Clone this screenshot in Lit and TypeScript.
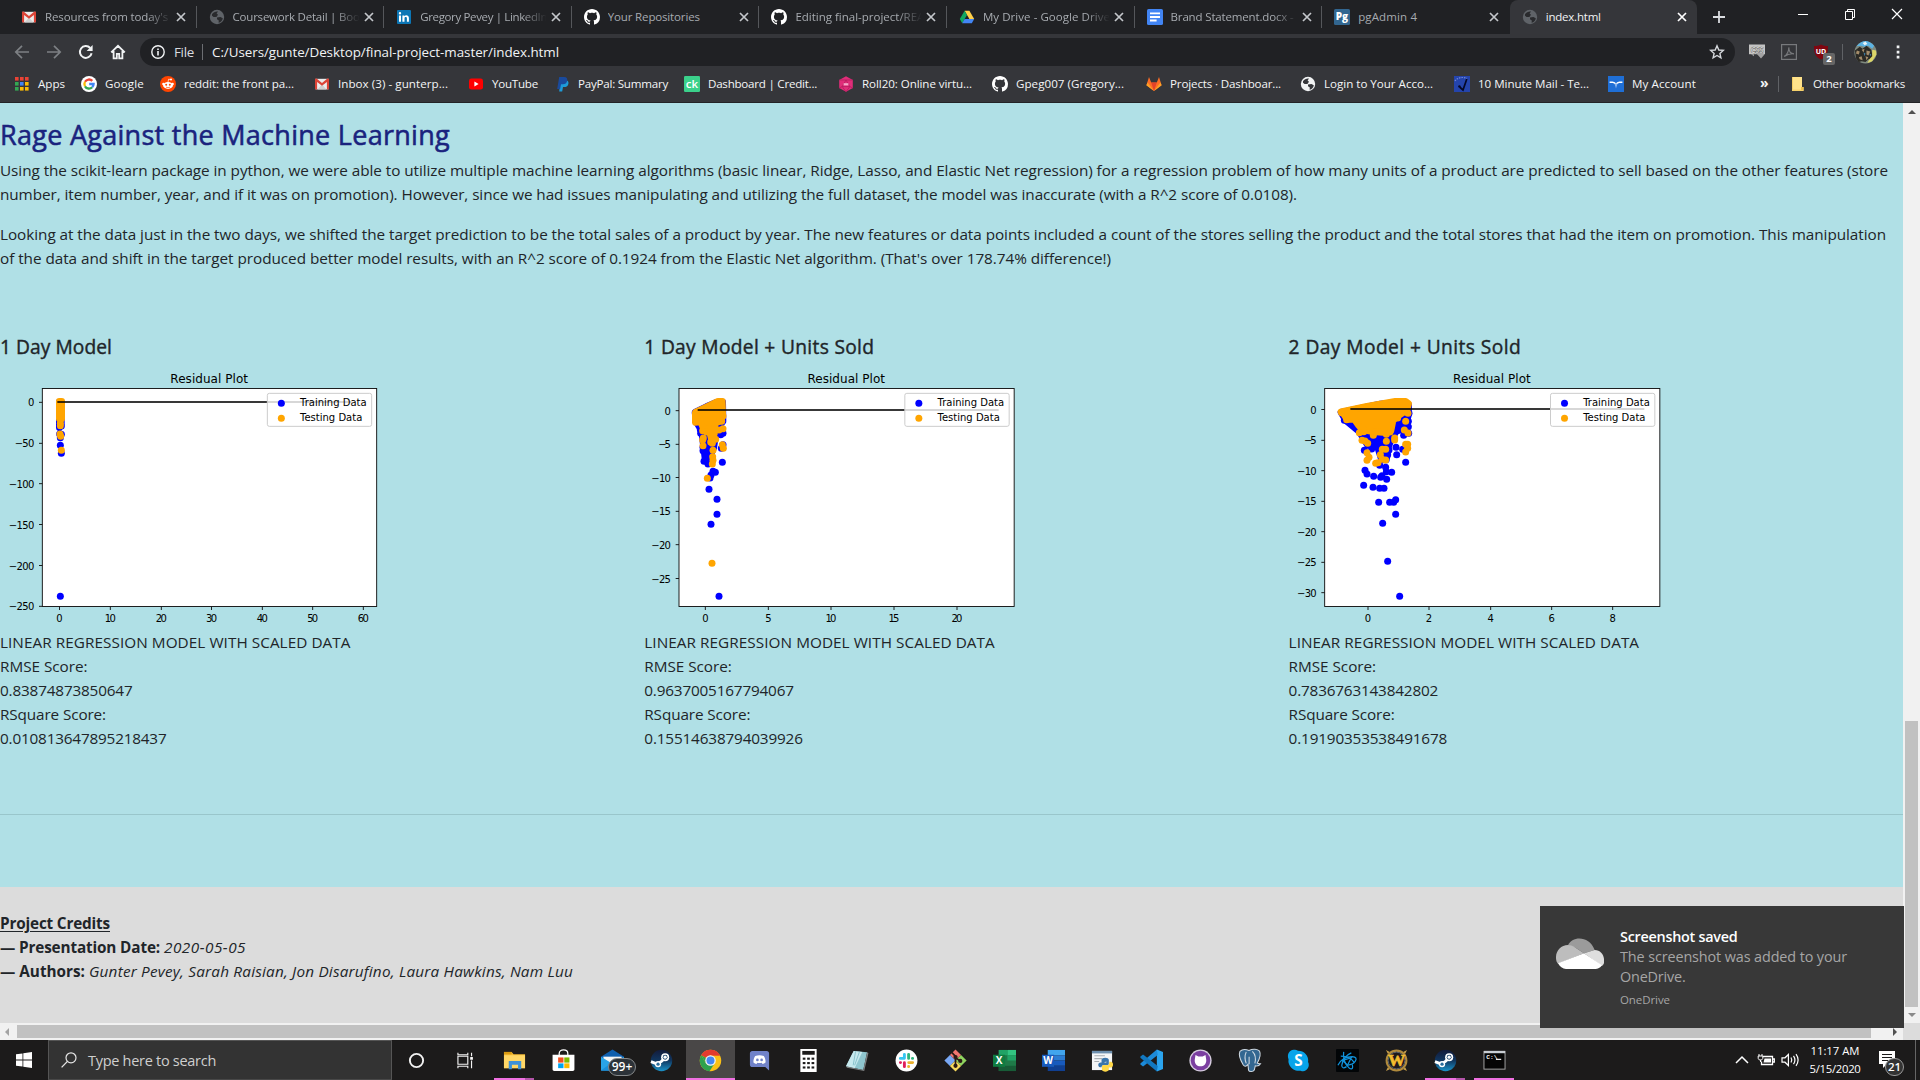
import { LitElement, html, svg, css, TemplateResult } from "lit";
import { customElement, property } from "lit/decorators.js";
import { classMap } from "lit/directives/class-map.js";

const GH =
  "M8 0C3.58 0 0 3.58 0 8c0 3.54 2.29 6.53 5.47 7.59.4.07.55-.17.55-.38 0-.19-.01-.82-.01-1.49-2.01.37-2.53-.49-2.69-.94-.09-.23-.48-.94-.82-1.13-.28-.15-.68-.52-.01-.53.63-.01 1.08.58 1.23.82.72 1.21 1.87.87 2.33.66.07-.52.28-.87.51-1.07-1.78-.2-3.64-.89-3.64-3.95 0-.87.31-1.59.82-2.15-.08-.2-.36-1.02.08-2.12 0 0 .67-.21 2.2.82.64-.18 1.32-.27 2-.27s1.36.09 2 .27c1.53-1.04 2.2-.82 2.2-.82.44 1.1.16 1.92.08 2.12.51.56.82 1.27.82 2.15 0 3.07-1.87 3.75-3.65 3.95.29.25.54.73.54 1.48 0 1.07-.01 1.93-.01 2.2 0 .21.15.46.55.38A8.01 8.01 0 0 0 16 8c0-4.42-3.58-8-8-8z";

const globe = (bg: string, fg: string) => svg`
  <circle cx="8" cy="8" r="7.2" fill=${bg}/>
  <path d="M3 5.2C4.5 3 7 2.2 9 2.6L7.6 4.6 9 5.8 7.4 8H4.6L3 6.8z M8 8.4l3.4-.4 2.4 1.2c-.4 2.4-2 4.2-4.2 4.6l.2-2.4L8 10.2z" fill=${fg}/>`;

const steam = svg`
  <defs><linearGradient id="st" x1="0" y1="0" x2="0" y2="1"><stop offset="0" stop-color="#131b3a"/><stop offset=".5" stop-color="#10365f"/><stop offset="1" stop-color="#1b93c9"/></linearGradient></defs>
  <circle cx="12" cy="12" r="11.2" fill="url(#st)"/>
  <path d="M1 13.2l6.8 2.6 4.4-3.2 4.6-4.2" stroke="#fff" stroke-width="3" fill="none"/>
  <circle cx="15.8" cy="8.6" r="4.2" fill="#fff"/><circle cx="15.8" cy="8.6" r="2.5" fill="#17406b"/><circle cx="15.8" cy="8.6" r="1.7" fill="#fff"/>
  <circle cx="8.4" cy="15.8" r="3.2" fill="#fff"/><circle cx="8.4" cy="15.8" r="1.7" fill="#2a6d9c"/>`;

/* name -> [viewBox edge, drawing] */
const ICONS: Record<string, [number, TemplateResult]> = {
  gmail: [16, svg`<path d="M1.5 2.8h13v10.6h-13z" fill="#ececec"/><path d="M3.4 13.4l4.6-5 4.6 5z" fill="#d0d0d0"/><path d="M1 3.4c0-1 1-1.2 1.6-.8L8 7l5.4-4.4c.6-.4 1.6-.2 1.6.8v9.2c0 .5-.3.8-.8.8h-1.3V5.9L8 9.8 3.1 5.9v7.5H1.8c-.5 0-.8-.3-.8-.8z" fill="#dc4437"/>`],
  globeDim: [16, globe("#5f6368", "#292a2d")],
  globeLight: [16, globe("#f1f3f4", "#35363a")],
  linkedin: [16, svg`<rect x="1" y="1" width="14" height="14" rx="1" fill="#0c76b5"/><path d="M3 6.4h2v6.4H3zM4 3a1.2 1.2 0 1 1 0 2.4A1.2 1.2 0 0 1 4 3zM6.4 6.4h2v.9c1-1.6 4.5-1.5 4.5 1.7v3.8h-2V9.4c0-1.8-2.4-1.7-2.4 0v3.4H6.4z" fill="#fff"/>`],
  github: [16, svg`<path d=${GH} fill="#fff"/>`],
  drive: [16, svg`<path d="M5.6 1.8h4.8l4.8 8.2h-4.8z" fill="#ffcf48"/><path d="M5.6 1.8L8 6 3.2 14.2.8 10z" fill="#11a861"/><path d="M5.6 10h9.6l-2.4 4.2H3.2z" fill="#4285f4"/>`],
  docs: [16, svg`<rect x="0" y="0" width="16" height="16" rx="1.6" fill="#4285f4"/><path d="M3 3.4h10v1.9H3zM3 7h10v1.9H3zM3 10.6h6.6v1.9H3z" fill="#fff"/>`],
  pgadmin: [16, svg`<rect width="16" height="16" rx="1.5" fill="#326690"/><text x="8" y="11" font-size="10" font-weight="800" text-anchor="middle" fill="#fff" font-family="Open Sans">Pg</text>`],
  apps: [16, svg`${[0, 1, 2].map((r) => [0, 1, 2].map((c) => svg`<rect x=${1 + c * 5} y=${1 + r * 5} width="3.6" height="3.6" fill=${[["#ea4335", "#ea4335", "#ea4335"], ["#34a853", "#4285f4", "#fbbc04"], ["#34a853", "#fbbc04", "#fbbc04"]][r][c]}/>`))}`],
  google: [16, svg`<circle cx="8" cy="8" r="8" fill="#fff"/><g fill="none" stroke-width="2.3"><path d="M11.3 4.9A4.6 4.6 0 0 0 4 5.8" stroke="#ea4335"/><path d="M4 5.8a4.6 4.6 0 0 0 0 4.5" stroke="#fbbc05"/><path d="M4 10.3a4.6 4.6 0 0 0 7.2.9" stroke="#34a853"/><path d="M11.2 11.2A4.6 4.6 0 0 0 12.6 8H8.2" stroke="#4285f4"/></g>`],
  reddit: [16, svg`<circle cx="8" cy="8" r="8" fill="#ff4500"/><ellipse cx="8" cy="9.4" rx="4.9" ry="3.5" fill="#fff"/><circle cx="3.4" cy="8" r="1.2" fill="#fff"/><circle cx="12.6" cy="8" r="1.2" fill="#fff"/><circle cx="11" cy="3.6" r="1" fill="#fff"/><path d="M8 6l.6-2.8 2.2.4" stroke="#fff" stroke-width=".7" fill="none"/><circle cx="6.2" cy="8.8" r="1" fill="#ff4500"/><circle cx="9.8" cy="8.8" r="1" fill="#ff4500"/><path d="M6 11c1 .9 3 .9 4 0" stroke="#ff4500" stroke-width=".7" fill="none"/>`],
  youtube: [16, svg`<rect x="1" y="2.6" width="14" height="11" rx="2.4" fill="#f00"/><path d="M6.4 5.6v5l4.2-2.5z" fill="#fff"/>`],
  paypal: [16, svg`<path d="M6.4 4.2h6.2c2 .8 2.2 2.6 1.6 4.2-.6 1.8-2 2.6-4 2.6H9l-.8 4.4h-3z" fill="#1e9bd8"/><path d="M5.2 1h5c2.4 0 3.4 1.4 3 3.4-.4 2.6-2 3.800-4.400 3.800H7L6.100 13H3.200z" fill="#1a4a9c"/>`],
  ck: [16, svg`<rect width="16" height="16" rx="1.2" fill="#3bd18b"/><text x="8" y="12.2" font-size="11.5" text-anchor="middle" fill="#fff" font-family="Open Sans" font-weight="600">ck</text>`],
  roll20: [16, svg`<path d="M8 .2l6.8 3.8v8L8 15.8 1.2 12V4z" fill="#e02d79"/><path d="M8 4l3.8 6.6H4.2z M1.2 4L8 4l6.8 0M1.2 12l3-1.4L8 15.8l3.8-5.2 3 1.4" fill="none" stroke="#b51d5e" stroke-width=".8"/><path d="M5.6 7.2h4.8v2.2H5.6z" fill="#f6a6c8"/>`],
  gitlab: [16, svg`<path d="M8 15L.4 9.2 3 1l2.2 5.4h5.6L13 1l2.6 8.2z" fill="#fc6d26"/><path d="M8 15L5.2 6.4h5.6z" fill="#e24329"/><path d="M8 15L.4 9.2 1.6 6.4zM8 15l7.6-5.8-1.2-2.8z" fill="#fca326"/>`],
  tenmin: [16, svg`<rect width="16" height="16" fill="#2444ac"/><path d="M1 5C3 1.600 9 .6 13 2.400" stroke="#6f86d8" stroke-width="1.200" stroke-dasharray="1.500 1" fill="none"/><path d="M12.800 3L9 14 5.600 11" stroke="#040826" stroke-width="1.700" fill="none"/><circle cx="5.400" cy="10.400" r="1.200" fill="#040826"/>`],
  account: [16, svg`<rect width="16" height="16" fill="#1f6fd6"/><path d="M1.600 6.200h3c2 0 2.400.6 3.400 2.200 1-1.600 1.400-2.200 3.400-2.200h3" stroke="#fff" stroke-width="1.500" fill="none"/><path d="M6.600 7.600L8 12.400l1.400-4.800z" fill="#8db6ee"/>`],
  folder: [16, svg`<path d="M2 1h10v10h1.600v4H2z" fill="#ffe28a"/><path d="M2 14.500h11.500V11H11v2.800H2zM2 1h.6v13H2z" fill="#eec04c"/>`],
  back: [16, svg`<path d="M15 8H2.4M8 1.8L1.8 8 8 14.2" fill="none" stroke="#7d8084" stroke-width="1.7"/>`],
  forward: [16, svg`<path d="M1 8h12.6M8 1.8L14.2 8 8 14.2" fill="none" stroke="#7d8084" stroke-width="1.7"/>`],
  reload: [16, svg`<path d="M13.6 9.2A5.9 5.9 0 1 1 12.2 4" fill="none" stroke="#f1f3f4" stroke-width="2"/><path d="M14.6 1v6H8.6z" fill="#f1f3f4"/>`],
  home: [16, svg`<path d="M1.2 8.4L8 1.8l6.8 6.6M3.6 7v7.4h3.2v-4.6h2.4v4.6h3.2V7" fill="none" stroke="#f1f3f4" stroke-width="1.8"/>`],
  info: [16, svg`<circle cx="8" cy="8" r="6.2" fill="none" stroke="#f1f3f4" stroke-width="1.4"/><path d="M7.2 7h1.6v4.4H7.2zM7.2 4.4h1.6V6H7.2z" fill="#f1f3f4"/>`],
  star: [16, svg`<path d="M8 1.8l1.8 4.2 4.5.4-3.4 3 1 4.4L8 11.5l-3.9 2.3 1-4.4-3.4-3 4.5-.4z" fill="none" stroke="#d5d8dc" stroke-width="1.4"/>`],
  cssx: [16, svg`<path d="M0 .5h16v9.700H0z" fill="#c4c4c4"/><text x="8" y="8.600" font-size="8.200" font-weight="700" text-anchor="middle" textLength="13" fill="#fff" stroke="#555" stroke-width=".5" font-family="Open Sans">CSS</text><path d="M7 9l5 5.500 3.500-4L14 9zM2 10.200h3v2z" fill="#a2a2a2"/>`],
  pdf: [16, svg`<rect x=".6" y=".6" width="14.8" height="14.8" fill="none" stroke="#77797c" stroke-width="1.2"/><path d="M3.200 12.400c3-1.400 4.800-6 4.600-9 0 3.800 2.200 6.200 5.200 6.400-3-.4-6.800.6-9.800 2.600z" fill="none" stroke="#77797c" stroke-width="1.200"/>`],
  shield: [16, svg`<path d="M8 .4c2 1.200 4.400 1.600 7 1.600 0 7-1 10.600-7 13.600C2 12.600 1 9 1 2c2.600 0 5-.4 7-1.600z" fill="#800610"/><text x="8" y="10" font-size="7" font-weight="700" text-anchor="middle" fill="#fff" font-family="Open Sans">UD</text>`],
  avatar: [24, svg`<circle cx="12" cy="12" r="11.600" fill="#7f8a80"/><path d="M2.500 5.500Q12-5 21 5l-2 3-4-3-4 1-4-1z" fill="#5cb4e4"/><path d="M9 2l3-1.500L14 3l-3 1.500z" fill="#e9f3f7"/><path d="M1 10l5-4 3 2 4-3 5 4 1 5 2 3-3 3-3-1-3 3-4-1-3 1-3-4z" fill="#2b2a25"/><path d="M19 9l4 1 .5 4-4.500 7-5 2 2-4 3-3z" fill="#ddd768"/><path d="M3 10l3 1-1 3-3-1zM8 9l3-1-1 4zM13 10l4 1-2 4-2-1zM5 17l3-1 1 4-3-1zM12 16l3 1-2 3z" fill="#a58d6b"/><path d="M10 12l2 1-1 3zM16 13l2 1-1 2z" fill="#3f7fa6"/>`],
  dots: [16, svg`<path d="M6.700 1.600h2.700v2.700H6.700zM6.700 6.700h2.700v2.700H6.700zM6.700 11.800h2.700v2.700H6.700z" fill="#f1f3f4"/>`],
  plus: [16, svg`<path d="M2 8h12M8 2v12" stroke="#dadce0" stroke-width="1.800"/>`],
  min: [16, svg`<path d="M3 8.500h10" stroke="#fff"/>`],
  restore: [16, svg`<path d="M3.500 5.500h7v8h-7zM5.500 5.500v-2h7v8h-2" fill="none" stroke="#fff"/>`],
  close: [16, svg`<path d="M3 3l10 10M13 3L3 13" stroke="#fff" stroke-width="1.200"/>`],
  tabclose: [16, svg`<path d="M4 4l8 8M12 4l-8 8" stroke="currentColor" stroke-width="1.700"/>`],
  windows: [16, svg`<path d="M0 2.300L6.500 1.400v6.200H0zM7.300 1.300L16 0v7.600H7.300zM0 8.400h6.500v6.200L0 13.700zM7.300 8.400H16V16l-8.700-1.300z" fill="#fff"/>`],
  search: [16, svg`<circle cx="10" cy="5.800" r="5" fill="none" stroke="#e6e6e6" stroke-width="1.200"/><path d="M6.400 9.400L.6 15.400" stroke="#e6e6e6" stroke-width="1.300"/>`],
  cortana: [24, svg`<circle cx="12" cy="12" r="6.900" fill="none" stroke="#f2f2f2" stroke-width="2"/>`],
  taskview: [24, svg`<g fill="none" stroke="#f2f2f2" stroke-width="1.200"><path d="M4.100 7.600h10.300v8.300H4.100zM4.100 4v2h10.300V4M4.100 20v-2h10.300v2M18.300 4v3.600M18.300 12v8"/></g><path d="M16.900 8.400h2.800v2.800h-2.800z" fill="#fff"/>`],
  explorer: [24, svg`<path d="M1 3h8l2 2.500h12V20H1z" fill="#f5bc35"/><path d="M1 6.500h22V20H1z" fill="#ffd766"/><path d="M1 3h8v2.600H1z" fill="#d99a12"/><path d="M6 21v-8.500h13V21h-3.300v-4.500H9.300V21z" fill="#3d91d8"/>`],
  store: [24, svg`<path d="M7.500 7V4.600c0-5 9-5 9 0V7" fill="none" stroke="#fff" stroke-width="1.300"/><path d="M.6 6h22.800v15.200c0 1-.6 1.800-1.800 1.800H2.400C1.200 23 .6 22.200.6 21.200z" fill="#fff"/><path d="M6.400 8.800H12v5.400H6.400z" fill="#f25022"/><path d="M12.800 8.800h5.400v5.400h-5.400z" fill="#7fba00"/><path d="M6.400 15H12v5H6.400z" fill="#00a4ef"/><path d="M12.800 15h5.400v5h-5.400z" fill="#ffb900"/>`],
  mail: [24, svg`<path d="M12 .5L24 8v14.500H0V8z" fill="#0f5fae"/><path d="M2.500 8h19v9h-19z" fill="#f4f4f4"/><path d="M0 8l12 7.500L24 8v14.500H0z" fill="#29a4e8"/><path d="M0 22.500L14 12l10 10.500z" fill="#1c8fd8"/>`],
  steam: [24, steam],
  chrome: [24, svg`<circle cx="12" cy="12" r="11.200" fill="#fbc116"/><path d="M2.300 6.400A11.200 11.200 0 0 1 21.700 6.400H12L7.200 9.200z" fill="#e33b2e"/><path d="M2.300 6.400A11.200 11.200 0 0 0 11 23.200l5.400-8.400-4.400 2-4.800-2z" fill="#2ea14f"/><path d="M2.300 6.400l5 8.400 1-5z" fill="#2ea14f"/><path d="M12 6.400h9.700" stroke="#e33b2e"/><circle cx="12" cy="12" r="5.500" fill="#f4f4f4"/><circle cx="12" cy="12" r="4.200" fill="#4688f1"/>`],
  discord: [24, svg`<path d="M4.500 2h15c1.500 0 2.500 1 2.500 2.500V22.500l-4-3.600H4.500C3 18.900 2 18 2 16.400V4.500C2 3 3 2 4.500 2z" fill="#7082c9"/><path d="M7.500 7.400c3-1.300 6-1.300 9 0 1.300 2 2 4.500 1.800 6.800-1 .9-2 1.300-3.200 1.400l-.7-1.200c-1.600.4-3.200.4-4.800 0l-.7 1.200c-1.200-.1-2.200-.5-3.200-1.400-.2-2.300.5-4.800 1.800-6.800z" fill="#fff"/><circle cx="9.800" cy="11.400" r="1.400" fill="#7082c9"/><circle cx="14.200" cy="11.400" r="1.400" fill="#7082c9"/>`],
  calc: [24, svg`<path d="M3.500 0h17v24h-17z" fill="#fff"/><path d="M5.500 2h13v4h-13z" fill="#1b1a1a"/>${[0, 1, 2].map((r) => [0, 1, 2].map((c) => svg`<rect x=${6 + c * 4.600} y=${9 + r * 4.600} width="2.800" height="2.200" fill="#1b1a1a"/>`))}`],
  notepad: [24, svg`<path d="M8 2l14 1.500L18 22 0 18z" fill="#8fc6cf"/><path d="M8 2l9 1L9 20 0 18z" fill="#c7e9ee"/><path d="M22 3.500l1.400.8L19 23l-1-1zM0 18l18 4 1 1L1 19.500z" fill="#7c7f80"/><path d="M10 2.500L7.500 17M14 3l-5 14" stroke="#6ab0bc" stroke-width=".7"/>`],
  slack: [24, svg`<circle cx="12" cy="12" r="11.400" fill="#fff"/><g stroke-width="3" stroke-linecap="round"><path d="M9.800 5.600v4M5.600 9.800h4" stroke="#36c5f0"/><path d="M14.200 5.600v4.200M18.400 9.800h-.2" stroke="#2eb67d"/><path d="M14.300 14.200h4.100M14.200 18.400v-.2" stroke="#ecb22e"/><path d="M9.800 14.300v4.100M5.600 14.200h.2" stroke="#e01e5a"/></g>`],
  git: [24, svg`<path d="M12 .4l5.800 5.800L12 12 6.200 6.200z" fill="#f0756f"/><path d="M6.200 6.200L12 12l-5.800 5.800L.4 12z" fill="#79a8f5"/><path d="M17.800 6.200L23.600 12l-5.800 5.800L12 12z" fill="#8fd45f"/><path d="M12 12l5.800 5.800-5.800 5.800-5.800-5.800z" fill="#f8d95c"/><path d="M8 3.600l4 4V18M12 9l5 3.600" stroke="#2b1b17" stroke-width="1.800" fill="none"/><circle cx="12" cy="8.400" r="2.200" fill="#2b1b17"/><circle cx="12" cy="17.600" r="2.200" fill="#2b1b17"/><circle cx="17" cy="12.400" r="2.200" fill="#2b1b17"/>`],
  excel: [24, svg`<path d="M6 1h18v22H6z" fill="#1f7a48"/><path d="M15 1h9v5.500h-9z" fill="#33c481"/><path d="M6 1h9v5.500H6z" fill="#21a366"/><path d="M15 6.500h9V12h-9z" fill="#21a366"/><path d="M6 17.500h18V23H6z" fill="#185c37"/><rect x="0" y="6" width="12.600" height="12.600" fill="#107c41"/><text x="6.300" y="16" font-size="10.500" font-weight="700" text-anchor="middle" fill="#fff" font-family="Open Sans">X</text>`],
  word: [24, svg`<path d="M6 1h18v5.500H6z" fill="#41a5ee"/><path d="M6 6.500h18V12H6z" fill="#2b7cd3"/><path d="M6 12h18v5.500H6z" fill="#185abd"/><path d="M6 17.500h18V23H6z" fill="#103f91"/><rect x="0" y="6" width="12.600" height="12.600" fill="#185abd"/><text x="6.300" y="16" font-size="10.500" font-weight="700" text-anchor="middle" fill="#fff" font-family="Open Sans">W</text>`],
  python: [24, svg`<path d="M1 2h21v20H1z" fill="#f5f6f7"/><path d="M1 2h21v2.600H1z" fill="#6d8fae"/><path d="M3.500 7h11M3.500 10h8M3.500 13h5" stroke="#a9aeb2" stroke-width="1.200"/><path d="M11 15v-3.600c0-3.200 7.600-3.200 7.600 0V15c0 1.600-1 2-2 2h-3.600c-1 0-2 .8-2 2H9.400c-2.600-.6-2.400-5 .6-5h6v-1z" fill="#3a75ab"/><path d="M19 13.400h2c2.800.6 2.600 5.600 0 6h-2.400v2c0 3-7.200 3-7.200 0v-2.600c0-1.600 1-2 2-2h3.600c1 0 2-.8 2-2z" fill="#ffd848"/>`],
  vscode: [24, svg`<path d="M17.600.5L24 3.200v17.600l-6.400 2.700z" fill="#2ba4ee"/><path d="M17.600.5L18.500 6.300 3.200 18.200.4 16.300V15z" fill="#1c8ad8"/><path d="M17.600 23.500l.9-5.800L3.200 5.800.4 7.700V9z" fill="#1278c0"/>`],
  ghdesk: [24, svg`<circle cx="12" cy="12" r="11.600" fill="#d7cfe0"/><circle cx="12" cy="12" r="10.200" fill="#7b3fa0"/><path d="M6.800 6.200l3 1.600h4.400l3-1.600.6 3.600c1 4.400-1.200 8.200-5.800 8.200s-6.800-3.800-5.800-8.200z" fill="#fff"/>`],
  postgres: [24, svg`<path d="M2 2.500C5-.5 9 .5 11.500 1.500c4-2 9-1.500 11 .8 1.500 3-.5 9-2.500 12.500 1 .8 2.500.6 3.500.6-1.500 2.400-4 2.600-5.500 2.200L17 22c-1 2-5.500 2.200-6 0l-.6-6c-2 2.600-3.600 2.600-5 .4C2.800 12 .4 6 2 2.500z" fill="#336791" stroke="#cfd9e2" stroke-width="1.100"/><path d="M8.600 3C6.800 7 7 11 8.600 15M15 2.500c3 3 4 7 2.600 12.500M11.600 8v8" stroke="#cfd9e2" stroke-width="1.100" fill="none"/>`],
  skype: [24, svg`<path d="M7 .8c2.200 0 3.200.5 4.400 1A10.400 10.400 0 0 1 22 13.600c2.600 5-2 11.400-7.800 9A10.600 10.600 0 0 1 1.600 10.600C-.2 6 2 1.200 7 .8z" fill="#08a4ea"/><text x="12" y="17.600" font-size="16" font-weight="700" text-anchor="middle" fill="#fff" font-family="Open Sans">S</text>`],
  battle: [24, svg`<rect width="24" height="24" rx="1" fill="#020507"/><g fill="none" stroke="#1193dc" stroke-width="1.300"><path d="M2 17c3-6 8-9 15-9 4 .4 5 2 3 5-2 2.600-6 4-9 3.600"/><path d="M8 3c-1 6 1 13 6 17 3 2 4 0 3-4"/><path d="M16 4c-5 2-9 7-10 13 0 3 2 3.400 5 1.400"/><path d="M5 7.500c5 0 11 2 14 6.500M7 12l5 5 4-8z"/></g>`],
  wow: [24, svg`<circle cx="12" cy="12" r="10.300" fill="#1d1a1c" stroke="#b08a3c" stroke-width="2.200"/><circle cx="12" cy="12" r="8.700" fill="none" stroke="#5d6670"/><text x="12" y="18.200" font-size="17" font-weight="900" text-anchor="middle" textLength="18" lengthAdjust="spacingAndGlyphs" fill="#f3bd2f" stroke="#f3bd2f" stroke-width=".6" font-family="Liberation Serif">W</text><path d="M1 1l4 2-2 2zM23 1l-4 2 2 2zM1 23l4-2-2-2zM23 23l-4-2 2-2z" fill="#c8a04a"/>`],
  cmd: [24, svg`<rect x="1" y="2.500" width="22" height="18.500" fill="#050505" stroke="#a8a8a8"/><path d="M1 2h22v2.400H1z" fill="#c9ced4"/><text x="3.400" y="10.800" font-size="6.500" font-weight="700" fill="#fff" font-family="Liberation Mono">C:\\</text><path d="M13.500 10.800h5.500" stroke="#fff" stroke-width="1.200"/>`],
  chevron: [20, svg`<path d="M4 13l6-6 6 6" fill="none" stroke="#fff" stroke-width="1.500"/>`],
  battery: [20, svg`<path d="M7 6.500h9.500v8h-11v-3M16.500 9h1.800v3h-1.800" fill="none" stroke="#fff" stroke-width="1.300"/><path d="M8.500 8.500h6.500v4H7.500z" fill="#fff"/><path d="M3 4v2M6 4v2M2.200 6h4.600v2.400L5.600 10H3.400L2.200 8.400zM4.500 10v2" stroke="#fff" fill="none"/>`],
  speaker: [20, svg`<path d="M2 7.800h3l3.400-3.300v11L5 12.200H2z" fill="none" stroke="#fff" stroke-width="1.200"/><path d="M11 7.500c1 1.600 1 3.400 0 5M13.500 5.800c1.800 2.600 1.800 5.800 0 8.400M16 4.200c2.600 3.600 2.600 8 0 11.600" fill="none" stroke="#fff" stroke-width="1.200"/>`],
  action: [20, svg`<path d="M1 1h16v13H9l-4 4v-4H1z" fill="#fff"/><path d="M4 4.500h10M4 7.500h10M4 10.500h6" stroke="#1b1a1a" stroke-width="1.100"/>`],
};

/** Text set to an exact advance width by distributing letter spacing. */
@customElement("fit-text")
export class FitText extends LitElement {
  static styles = css`
    :host { display: inline-block; white-space: pre; flex: none; }
    .t { display: inline-block; }
    :host(.u) .t { text-decoration: underline; text-underline-offset: 2px; }
  `;
  @property() text = "";
  @property({ type: Number }) w = 0;
  protected updated() {
    const el = this.renderRoot.querySelector<HTMLElement>(".t");
    if (!el || !this.w) return;
    el.style.letterSpacing = "0px";
    const natural = el.getBoundingClientRect().width;
    el.style.letterSpacing = `${(this.w - natural) / this.text.length}px`;
  }
  render() {
    return html`<span class="t">${this.text}</span>`;
  }
}

@customElement("ui-icon")
export class UiIcon extends LitElement {
  static styles = css`
    :host { display: block; flex: none; width: 16px; height: 16px; }
    .i { display: block; width: 100%; height: 100%; overflow: visible; }
  `;
  @property() name = "";
  render() {
    const [n, body] = ICONS[this.name];
    return html`<svg class="i" viewBox="0 0 ${n} ${n}">${body}</svg>`;
  }
}

type Pt = [number, number];
interface Plot {
  x0: number; left: number; right: number;
  xt: [number, string][]; yt: [number, string][];
  line: [number, number, number];
  blue: Pt[]; orange: Pt[]; blueMass: string; orangeMass: string;
}

/** Residual scatter plot; drawing units are thirds of a pixel. */
@customElement("residual-plot")
export class ResidualPlot extends LitElement {
  static styles = css`
    :host { display: block; }
    .plot { display: block; width: 391px; height: 265px; font-family: "DejaVu Sans", sans-serif; }
  `;
  @property({ attribute: false }) plot!: Plot;
  render() {
    const p = this.plot;
    const lg = p.right - 328;
    const dots = (list: Pt[], fill: string) => list.map(([x, y]) => svg`<circle cx=${x} cy=${y} r="10.500" fill=${fill}/>`);
    return html`<svg class="plot" viewBox="${p.x0} 12 1173 795">
      <rect x=${p.left} y="85.500" width=${p.right - p.left} height="654" fill="#fff"/>
      <polygon points=${p.blueMass} fill="#00f" stroke="#00f" stroke-width="20" stroke-linejoin="round"/>
      ${dots(p.blue, "#00f")}
      <polygon points=${p.orangeMass} fill="#ffa500" stroke="#ffa500" stroke-width="20" stroke-linejoin="round"/>
      ${dots(p.orange, "#ffa500")}
      <path d="M${p.line[0]} ${p.line[2]}H${p.line[1]}" stroke="#000" stroke-opacity=".78" stroke-width="6"/>
      <rect x=${p.left} y="85.500" width=${p.right - p.left} height="654" fill="none" stroke="#111" stroke-width="2.800"/>
      ${p.xt.map(([x, t]) => svg`<path d="M${x} 740v10" stroke="#111" stroke-width="2.800"/><text x=${x} y="786" font-size="30" text-anchor="middle" textLength=${t.length > 1 ? 33 : 17}>${t}</text>`)}
      ${p.yt.map(([y, t]) => svg`<path d="M${p.left - 10} ${y}h10" stroke="#111" stroke-width="2.800"/><text x=${p.left - 24} y=${y + 12} font-size="30" text-anchor="end" textLength=${[0, 19, 38, 59, 77][t.length]}>${t}</text>`)}
      <text x=${(p.left + p.right) / 2 - 1} y="68" font-size="36" text-anchor="middle" textLength="233">Residual Plot</text>
      <rect x=${lg} y="100" width="313" height="99" rx="6" fill="#fff" fill-opacity=".8" stroke="#ccc" stroke-width="3"/>
      <circle cx=${lg + 42} cy="130" r="10.500" fill="#00f"/><circle cx=${lg + 42} cy="175" r="10.500" fill="#ffa500"/>
      <text x=${lg + 98} y="138" font-size="30" textLength="200">Training Data</text>
      <text x=${lg + 98} y="183" font-size="30" textLength="187">Testing Data</text>
    </svg>`;
  }
}

const PLOTS: Plot[] = [
  {
    x0: 0, left: 127, right: 1130,
    xt: [[178.500, "0"], [331, "10"], [484, "20"], [634.500, "30"], [787, "40"], [938, "50"], [1090, "60"]],
    yt: [[127, "0"], [250, "−50"], [371, "−100"], [493.500, "−150"], [616.500, "−200"], [739, "−250"]],
    line: [172, 1054, 126],
    blueMass: "178,126 184,126 184,190 178,204",
    blue: [[184, 198], [184, 223], [181, 233], [179, 222], [181, 256], [184, 280], [181, 709]],
    orangeMass: "178,124 185,124 185,176 178,176",
    orange: [[181, 190], [181, 197], [180, 222], [182, 229], [184, 271]],
  },
  {
    x0: 13, left: 118, right: 1123.500,
    xt: [[197, "0"], [386, "5"], [574, "10"], [763, "15"], [952, "20"]],
    yt: [[152, "0"], [253, "−5"], [352.500, "−10"], [454, "−15"], [554, "−20"], [655.500, "−25"]],
    line: [174, 1077, 150],
    blueMass: "166,157 200,140 230,127 249,126 250,184 240,196 228,225 222,264 206,300 197,303 193,270 186,212 170,186",
    blue: [[182, 209], [183, 220], [190, 272], [193, 304], [205, 312], [190, 262], [250, 220], [243, 224], [245, 265], [250, 254], [248, 307], [220, 334], [227, 337], [214, 345], [211, 354], [208, 388], [232, 418], [232, 463], [214, 493], [238, 709]],
    orangeMass: "167,157 200,141 235,124 248,124 249,160 244,182 226,190 224,222 215,236 208,208 190,203 183,185 167,187",
    orange: [[250, 168], [246, 184], [218, 250], [213, 246], [191, 234], [190, 257], [189, 240], [228, 238], [220, 271], [219, 290], [220, 301], [218, 312], [238, 210], [250, 206], [248, 254], [251, 265], [203, 355], [217, 610], [189, 212], [201, 216]],
  },
  {
    x0: 26, left: 133, right: 1138.500,
    xt: [[263, "0"], [446, "2"], [631, "4"], [814, "6"], [997, "8"]],
    yt: [[148.500, "0"], [241, "−5"], [332, "−10"], [424, "−15"], [515, "−20"], [607, "−25"], [698, "−30"]],
    line: [210, 1092, 147],
    blueMass: "182,157 300,132 370,125 385,134 384,166 374,205 348,214 332,240 324,262 318,300 304,300 290,256 262,256 236,214 196,181",
    blue: [[192, 181], [204, 180], [232, 204], [386, 160], [384, 184], [384, 200], [326, 270], [322, 284], [298, 316], [316, 322], [252, 271], [274, 267], [347, 262], [349, 284], [367, 268], [385, 220], [370, 226], [376, 307], [254, 331], [260, 342], [280, 349], [305, 347], [301, 352], [319, 358], [318, 335], [334, 337], [250, 376], [278, 382], [298, 385], [311, 385], [295, 427], [328, 427], [340, 427], [346, 419], [346, 463], [307, 490], [322, 604], [358, 709]],
    orangeMass: "182,155 260,139 345,124 376,124 385,131 380,150 350,170 338,182 332,212 318,218 278,215 246,209 234,195 222,178 200,178 190,162",
    orange: [[184, 158], [199, 179], [383, 160], [376, 184], [372, 210], [383, 219], [237, 218], [250, 215], [279, 226], [318, 223], [329, 216], [352, 174], [245, 241], [254, 243], [262, 250], [318, 244], [343, 234], [343, 240], [260, 278], [266, 292], [260, 301], [306, 268], [316, 268], [300, 284], [305, 298], [316, 300], [286, 310], [293, 308], [376, 253], [382, 253], [382, 265], [376, 276]],
  },
];

const MODELS = [
  { title: "1 Day Model", tw: 112, rmse: ["0.83874873850647", 132.500], rsq: ["0.010813647895218437", 166.500] },
  { title: "1 Day Model + Units Sold", tw: 230, rmse: ["0.9637005167794067", 149.500], rsq: ["0.15514638794039926", 158.500] },
  { title: "2 Day Model + Units Sold", tw: 232.500, rmse: ["0.7836763143842802", 149.500], rsq: ["0.19190353538491678", 158.500] },
] as { title: string; tw: number; rmse: [string, number]; rsq: [string, number] }[];

const TABS: [string, string, number][] = [
  ["gmail", "Resources from today's", 123],
  ["globeDim", "Coursework Detail | Boo", 127],
  ["linkedin", "Gregory Pevey | LinkedIn", 127],
  ["github", "Your Repositories", 92],
  ["github", "Editing final-project/REA", 129],
  ["drive", "My Drive - Google Drive", 127],
  ["docs", "Brand Statement.docx -", 123],
  ["pgadmin", "pgAdmin 4", 59],
  ["globeDim", "index.html", 55],
];

/* icon, label, label width, slot width */
const BOOKMARKS: [string, string, number, number][] = [
  ["apps", "Apps", 27, 27],
  ["google", "Google", 39, 39],
  ["reddit", "reddit: the front pa...", 110, 114],
  ["gmail", "Inbox (3) - gunterp...", 110, 114],
  ["youtube", "YouTube", 46, 46],
  ["paypal", "PayPal: Summary", 90, 90],
  ["ck", "Dashboard | Credit...", 109, 114],
  ["roll20", "Roll20: Online virtu...", 110, 114],
  ["github", "Gpeg007 (Gregory...", 108, 114],
  ["gitlab", "Projects · Dashboar...", 111, 114],
  ["globeLight", "Login to Your Acco...", 109, 114],
  ["tenmin", "10 Minute Mail - Te...", 111, 114],
  ["account", "My Account", 64, 64],
];

const TASKS = ["cortana", "taskview", "explorer", "store", "mail", "steam", "chrome", "discord", "calc", "notepad", "slack", "git", "excel", "word", "python", "vscode", "ghdesk", "postgres", "skype", "battle", "wow", "steam", "cmd"];
const OPEN = new Set([2, 6, 21, 22]);
const STACKED = new Set([2, 21]);

@customElement("app-root")
export class AppRoot extends LitElement {
  static styles = css`
    :host { display: block; width: 1920px; height: 1080px; overflow: hidden; font-family: "Open Sans", "Noto Sans", sans-serif; }
    * { box-sizing: border-box; }
    .screen { position: relative; width: 1920px; height: 1080px; display: flex; flex-direction: column; overflow: hidden; }

    .tabs { height: 34px; flex: none; background: #202124; display: flex; padding-left: 9px; font-size: 11.500px; color: #a7abb0; }
    .tab { width: 187.600px; display: flex; align-items: center; padding-left: 12px; }
    .title { margin-left: 8px; width: 128px; overflow: hidden; line-height: 18px; }
    .title.fade { mask-image: linear-gradient(90deg, #000 80%, transparent 99%); }
    .x { color: #c4c7cb; }
    .tab.sep { border-right: 1px solid; border-image: linear-gradient(transparent 20%, #55575b 20%, #55575b 80%, transparent 80%) 1; }
    .tab.active { background: #35363a; border-radius: 8px 8px 0 0; color: #f1f3f4; }
    .tab.active .x { color: #fff; }
    .add { margin: 9px 0 0 14px; }
    .wins { margin-left: auto; display: flex; gap: 31px; padding: 6px 15px 0 0; }

    .bar { height: 34px; flex: none; background: #35363a; display: flex; align-items: center; padding: 2px 13px 0 14px; }
    .nav { display: flex; gap: 16px; width: 126px; }
    .omni { width: 1595px; height: 28px; margin-top: -1px; border-radius: 14px; background: #202124; display: flex; align-items: center; padding: 0 10px 0 10px; color: #f1f3f4; font-size: 13.400px; line-height: 24px; flex: none; }
    .omni .file { margin-left: 8px; color: #dadce0; }
    .omni .rule { width: 1px; height: 16px; background: #6c6e72; margin: 0 9px 0 8px; }
    .omni .star { margin-left: auto; }
    .ext { display: flex; align-items: center; margin-left: 14px; }
    .ext .e { margin-right: 16px; position: relative; }
    .ext .ctr { position: absolute; left: 10px; top: 9px; width: 12px; height: 12px; border-radius: 2px; background: #666; color: #fff; font-size: 9.500px; line-height: 12px; text-align: center; font-weight: 700; }
    .ext .rule { width: 1px; height: 16px; background: #606266; margin-right: 11px; margin-left: -3px; }
    .ext .av { width: 23px; height: 23px; margin-right: 13px; }

    .marks { height: 35px; flex: none; background: #35363a; border-bottom: 1px solid #232427; display: flex; align-items: center; padding: 0 15px 2px 14px; gap: 16px; font-size: 11.600px; line-height: 18px; color: #f4f5f6; }
    .mark { display: flex; gap: 8px; align-items: center; }
    .more { margin-left: auto; display: flex; align-items: center; }
    .more .chev { font-size: 14px; font-weight: 700; width: 10px; line-height: 14px; margin-top: -3px; }
    .more .rule { width: 1px; height: 16px; background: #606266; margin: 0 11px 0 8px; }
    .more .lbl { margin-left: 7px; }

    .view { height: 920px; flex: none; display: grid; grid-template-columns: 1903px 17px; }
    .page { background: #b0e0e6; display: flex; flex-direction: column; color: #212529; font-size: 15.300px; line-height: 24px; }
    .h3 { margin: 15px 0 6px; height: 34px; font-size: 27px; line-height: 34px; color: #1a237e; -webkit-text-stroke: .55px #1a237e; }
    .p { height: 48px; margin-bottom: 16px; display: flex; flex-direction: column; }
    .models { display: grid; grid-template-columns: 644.300px 644.300px 614px; margin-top: 49px; }
    .h4 { font-size: 19.200px; height: 29px; line-height: 24px; -webkit-text-stroke: .4px #212529; }
    .model { display: flex; flex-direction: column; }
    .lines { display: flex; flex-direction: column; padding-top: 1px; }
    .hr { height: 1px; background: #99c6cb; margin-top: 64px; }
    .foot { background: #dcdcdc; height: 136px; margin-top: auto; padding-top: 24px; }
    .foot .row { display: flex; gap: 4px; height: 24px; }
    .b { font-weight: 700; }
    .i { font-style: italic; }

    .vs { background: #f1f1f1; display: flex; flex-direction: column; align-items: center; }
    .vs .thumb { width: 13px; height: 286px; background: #c1c1c1; margin-top: 607px; }
    .ar { width: 0; height: 0; border: 4px solid transparent; }
    .up { border-bottom-color: #505050; border-top-width: 0; margin-top: 7px; }
    .dn { border-top-color: #8a8a8a; border-bottom-width: 0; margin-top: 6px; }
    .hs { height: 17px; flex: none; display: flex; align-items: center; background: #f1f1f1; }
    .hs .lf { border-right-color: #a3a3a3; border-left-width: 0; margin: 0 8px 0 5px; }
    .hs .thumb { height: 13px; width: 1854px; background: #c1c1c1; }
    .hs .rt { border-left-color: #505050; border-right-width: 0; margin: 0 6px 0 22px; }
    .hs .corner { width: 17px; height: 17px; background: #dcdcdc; margin-left: auto; }

    .task { height: 40px; flex: none; background: #1c1b1b; display: flex; color: #fff; }
    .start { width: 48px; padding: 12px 16px; }
    .search { width: 344px; background: #333; border: 1px solid #555; border-bottom-color: #484848; display: flex; align-items: center; padding-left: 12px; gap: 11px; font-size: 14.500px; color: #cfcfcf; }
    .slots { display: flex; }
    .slot { width: 49px; height: 40px; position: relative; display: flex; align-items: center; justify-content: center; }
    .slot.on { background: #494747; }
    .slot ui-icon { width: 23px; height: 23px; }
    .line { position: absolute; left: 4px; bottom: 0; width: 40px; height: 2px; background: #f070e2; }
    .line.on { left: 0; width: 49px; }
    .line.stk { background: linear-gradient(90deg, #f070e2 31px, #b455aa 31px); }
    .cnt { position: absolute; left: 20px; top: 18px; width: 28px; height: 18px; border-radius: 9px; background: #2c3238; border: 1px solid #85888a; font-size: 12px; line-height: 15px; font-weight: 600; text-align: center; }
    .tray { margin-left: auto; display: flex; align-items: center; height: 40px; }
    .tray .tr { width: 20px; height: 20px; }
    .tray .gap { margin-left: 4px; }
    .clock { display: flex; flex-direction: column; align-items: center; font-size: 11.300px; line-height: 18px; width: 72px; margin-left: -1px; }
    .act { position: relative; margin-left: 7px; }
    .act .n { position: absolute; left: 7px; top: 8px; width: 19px; height: 18px; border-radius: 9px; background: #333; border: 1px solid #999; font-size: 11.500px; font-weight: 600; line-height: 15px; text-align: center; }
    .desk { width: 1px; height: 40px; background: #666; margin: 0 4px 0 17px; }

    .toast { position: absolute; left: 1540px; top: 906px; width: 364px; height: 122px; background: #383838; display: flex; padding: 26px 16px; color: #a6a6a6; font-size: 14.400px; line-height: 20px; }
    .cloud { width: 48px; height: 32px; margin: 6px 16px 0 0; flex: none; }
    .msg { display: flex; flex-direction: column; margin-top: -5px; }
    .msg .hd { color: #fff; font-weight: 600; }
    .msg .src { font-size: 11.500px; line-height: 20px; margin-top: 3px; }
  `;

  private fit(text: string, w: number, cls = "") {
    return html`<fit-text class=${cls} .text=${text} .w=${w}></fit-text>`;
  }

  render() {
    return html`<div class="screen">
      <div class="tabs">
        ${TABS.map(([ic, t, w], i) => html`<div class=${classMap({ tab: true, sep: i < 7, active: i === 8 })}>
          <ui-icon .name=${ic}></ui-icon>
          <div class=${classMap({ title: true, fade: w > 100 })}>${this.fit(t, w)}</div>
          <ui-icon class="x" .name=${"tabclose"}></ui-icon>
        </div>`)}
        <ui-icon class="add" .name=${"plus"}></ui-icon>
        <div class="wins">${["min", "restore", "close"].map((n) => html`<ui-icon .name=${n}></ui-icon>`)}</div>
      </div>
      <div class="bar">
        <div class="nav">${["back", "forward", "reload", "home"].map((n) => html`<ui-icon .name=${n}></ui-icon>`)}</div>
        <div class="omni">
          <ui-icon .name=${"info"}></ui-icon>${this.fit("File", 20, "file")}<div class="rule"></div>
          ${this.fit("C:/Users/gunte/Desktop/final-project-master/index.html", 347)}
          <ui-icon class="star" .name=${"star"}></ui-icon>
        </div>
        <div class="ext">
          <ui-icon class="e" .name=${"cssx"}></ui-icon>
          <ui-icon class="e" .name=${"pdf"}></ui-icon>
          <div class="e"><ui-icon .name=${"shield"}></ui-icon><div class="ctr">2</div></div>
          <div class="rule"></div>
          <ui-icon class="av" .name=${"avatar"}></ui-icon>
          <ui-icon .name=${"dots"}></ui-icon>
        </div>
      </div>
      <div class="marks">
        ${BOOKMARKS.map(([ic, t, w, s]) => html`<div class="mark" style="width:${s + 24}px"><ui-icon .name=${ic}></ui-icon>${this.fit(t, w)}</div>`)}
        <div class="more"><span class="chev">»</span><div class="rule"></div><ui-icon .name=${"folder"}></ui-icon>${this.fit("Other bookmarks", 92, "lbl")}</div>
      </div>
      <div class="view">
        <div class="page">
          <div class="h3">${this.fit("Rage Against the Machine Learning", 450)}</div>
          <div class="p">
            ${this.fit("Using the scikit-learn package in python, we were able to utilize multiple machine learning algorithms (basic linear, Ridge, Lasso, and Elastic Net regression) for a regression problem of how many units of a product are predicted to sell based on the other features (store", 1888)}
            ${this.fit("number, item number, year, and if it was on promotion). However, since we had issues manipulating and utilizing the full dataset, the model was inaccurate (with a R^2 score of 0.0108).", 1297)}
          </div>
          <div class="p">
            ${this.fit("Looking at the data just in the two days, we shifted the target prediction to be the total sales of a product by year. The new features or data points included a count of the stores selling the product and the total stores that had the item on promotion. This manipulation", 1886)}
            ${this.fit("of the data and shift in the target produced better model results, with an R^2 score of 0.1924 from the Elastic Net algorithm. (That's over 178.74% difference!)", 1111)}
          </div>
          <div class="models">
            ${MODELS.map((m, i) => html`<div class="model">
              <div class="h4">${this.fit(m.title, m.tw)}</div>
              <residual-plot .plot=${PLOTS[i]}></residual-plot>
              <div class="lines">
                ${this.fit("LINEAR REGRESSION MODEL WITH SCALED DATA", 350.500)}
                ${this.fit("RMSE Score:", 87.500)}
                ${this.fit(m.rmse[0], m.rmse[1])}
                ${this.fit("RSquare Score:", 106)}
                ${this.fit(m.rsq[0], m.rsq[1])}
              </div>
            </div>`)}
          </div>
          <div class="hr"></div>
          <div class="foot">
            <div class="row">${this.fit("Project Credits", 110, "b u")}</div>
            <div class="row">${this.fit("— Presentation Date:", 160, "b")}${this.fit("2020-05-05", 82, "i")}</div>
            <div class="row">${this.fit("— Authors:", 85, "b")}${this.fit("Gunter Pevey, Sarah Raisian, Jon Disarufino, Laura Hawkins, Nam Luu", 484, "i")}</div>
          </div>
        </div>
        <div class="vs"><div class="ar up"></div><div class="thumb"></div><div class="ar dn"></div></div>
      </div>
      <div class="hs"><div class="ar lf"></div><div class="thumb"></div><div class="ar rt"></div><div class="corner"></div></div>
      <div class="task">
        <div class="start"><ui-icon .name=${"windows"}></ui-icon></div>
        <div class="search"><ui-icon .name=${"search"}></ui-icon>${this.fit("Type here to search", 128)}</div>
        <div class="slots">
          ${TASKS.map((n, i) => html`<div class=${classMap({ slot: true, on: i === 6 })}>
            <ui-icon .name=${n}></ui-icon>
            ${n === "mail" ? html`<div class="cnt">99+</div>` : ""}
            ${OPEN.has(i) ? html`<div class=${classMap({ line: true, on: i === 6, stk: STACKED.has(i) })}></div>` : ""}
          </div>`)}
        </div>
        <div class="tray">
          <ui-icon class="tr" .name=${"chevron"}></ui-icon>
          <ui-icon class="tr gap" .name=${"battery"}></ui-icon>
          <ui-icon class="tr gap" .name=${"speaker"}></ui-icon>
          <div class="clock">${this.fit("11:17 AM", 49)}${this.fit("5/15/2020", 51)}</div>
          <div class="act"><ui-icon class="tr" .name=${"action"}></ui-icon><div class="n">21</div></div>
          <div class="desk"></div>
        </div>
      </div>
      <div class="toast">
        <svg class="cloud" viewBox="0 0 144 96">
          <path d="M36 22C48-6 100-8 116 36L84 46 60 30z" fill="#9b9b9b"/>
          <path d="M36 21c-26 0-42 26-34 50l4 6L84 46 60 30C52 24 44 21 36 21z" fill="#bdbdbd"/>
          <path d="M84 46l32-10c22 0 32 22 27 42l-5 6z" fill="#dedede"/>
          <path d="M6 76L84 46l54 36c-6 8-12 11-20 11H30C20 93 11 86 6 76z" fill="#fff"/>
        </svg>
        <div class="msg">
          ${this.fit("Screenshot saved", 117.500, "hd")}
          ${this.fit("The screenshot was added to your", 227)}
          ${this.fit("OneDrive.", 65.500)}
          ${this.fit("OneDrive", 50, "src")}
        </div>
      </div>
    </div>`;
  }
}
